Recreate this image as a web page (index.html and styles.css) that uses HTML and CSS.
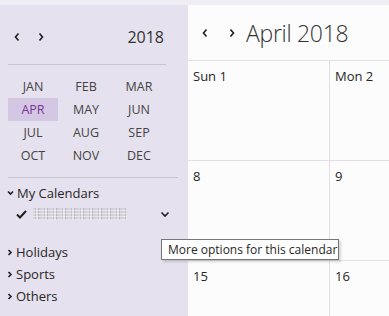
FILE: index.html
```html
<!DOCTYPE html>
<html lang="en">
<head>
    <meta charset="UTF-8">
    <title>Calendar</title>
    <link rel="stylesheet" href="styles.css">
</head>
<body>

    <div class="topbar"></div>

    <div class="app">

        <!-- Sidebar -->
        <div class="sidebar">
            <div class="year-nav">
                <span class="arrows">
                    <svg width="8" height="10" viewBox="0 0 8 10"><polyline points="5.5,1.5 2.5,5 5.5,8.5" /></svg>
                    <svg width="8" height="10" viewBox="0 0 8 10"><polyline points="2.5,1.5 5.5,5 2.5,8.5" /></svg>
                </span>
                <span class="year">2018</span>
            </div>
            <div class="sep"></div>

            <div class="months">
                <span>JAN</span><span>FEB</span><span>MAR</span>
                <span class="active">APR</span><span>MAY</span><span>JUN</span>
                <span>JUL</span><span>AUG</span><span>SEP</span>
                <span>OCT</span><span>NOV</span><span>DEC</span>
            </div>
            <div class="sep wide"></div>

            <div class="group open">
                <svg width="7" height="6" viewBox="0 0 7 6"><polyline points="1,1.5 3.5,4 6,1.5" /></svg>
                My Calendars
            </div>
            <div class="cal-item">
                <svg class="check" width="11" height="9" viewBox="0 0 11 9"><polyline points="1,4.5 4,7.5 10,1" /></svg>
                <!-- name is pixelated in the source -->
                <span class="blurred"></span>
                <svg class="more" width="10" height="7" viewBox="0 0 10 7"><polyline points="1.5,1.5 5,5 8.5,1.5" /></svg>
            </div>

            <div class="group first">
                <svg width="6" height="7" viewBox="0 0 6 7"><polyline points="1.5,1 4,3.5 1.5,6" /></svg>
                Holidays
            </div>
            <div class="group">
                <svg width="6" height="7" viewBox="0 0 6 7"><polyline points="1.5,1 4,3.5 1.5,6" /></svg>
                Sports
            </div>
            <div class="group">
                <svg width="6" height="7" viewBox="0 0 6 7"><polyline points="1.5,1 4,3.5 1.5,6" /></svg>
                Others
            </div>
        </div>

        <!-- Month view -->
        <div class="main">
            <div class="header">
                <span class="arrows">
                    <svg width="8" height="10" viewBox="0 0 8 10"><polyline points="5.5,1.5 2.5,5 5.5,8.5" /></svg>
                    <svg width="8" height="10" viewBox="0 0 8 10"><polyline points="2.5,1.5 5.5,5 2.5,8.5" /></svg>
                </span>
                <span class="title">April 2018</span>
            </div>
            <div class="grid">
                <div class="day">Sun 1</div>
                <div class="day">Mon 2</div>
                <div class="day">8</div>
                <div class="day">9</div>
                <div class="day">15</div>
                <div class="day">16</div>
            </div>
        </div>
    </div>

    <div class="tooltip">More options for this calendar</div>

</body>
</html>
```

FILE: styles.css
```css
body {
    margin: 0;
    font-family: "Open Sans", "Noto Sans", sans-serif;
    color: #262626;
    overflow: hidden;
    height: 316px;
    background-color: #fcfcfd;
}

svg polyline {
    fill: none;
    stroke: #1f1f1f;
    stroke-width: 1.6;
}

.topbar {
    height: 5px;
    background-color: #f0eef5;
}

.app {
    display: flex;
    height: 311px;
    overflow: hidden;
}

/* Sidebar */
.sidebar {
    width: 188px;
    flex-shrink: 0;
    background-color: #e6e1ee;
}

.year-nav {
    height: 59px;
    display: flex;
    align-items: center;
    justify-content: space-between;
    padding: 4px 24px 0 13px;
    box-sizing: border-box;
}

.arrows {
    display: flex;
    gap: 16px;
}

.year {
    font-size: 16px;
    color: #333;
}

.sep {
    border-top: 1px solid #c9c4cf;
    margin: 0 22px 0 8px;
}

.sep.wide {
    margin: 10px 10px 0 8px;
}

.months {
    display: grid;
    grid-template-columns: repeat(3, 50px);
    grid-auto-rows: 23px;
    column-gap: 3px;
    padding: 10px 0 0 8px;
    font-size: 12.5px;
    color: #444;
}

.months span {
    display: flex;
    align-items: center;
    justify-content: center;
}

.months .active {
    background-color: #d4c7e3;
    color: #7a3596;
}

.group {
    display: flex;
    align-items: center;
    gap: 3px;
    height: 22px;
    padding-left: 7px;
    font-size: 13px;
}

.group.open {
    margin-top: 4px;
}

.group.first {
    margin-top: 17px;
}

.cal-item {
    display: flex;
    align-items: center;
    height: 20px;
    padding-left: 16px;
}

.cal-item .check polyline {
    stroke-width: 2;
}

.blurred {
    margin-left: 6px;
    width: 94px;
    height: 12px;
    background:
        repeating-linear-gradient(0deg, rgba(255, 255, 255, 0.5) 0 1px, transparent 1px 3px),
        repeating-linear-gradient(90deg, #d8d3dd 0 2px, #bbb6c1 2px 3px, #e4e0e8 3px 5px, #b0abb6 5px 6px, #d2cdd7 6px 9px);
    filter: blur(0.5px);
    opacity: 0.85;
}

.cal-item .more {
    margin-left: 33px;
}

/* Month view */
.main {
    flex: 1;
    background-color: #fcfcfd;
    overflow: hidden;
}

.header {
    height: 56px;
    display: flex;
    align-items: center;
    gap: 10px;
    padding-left: 13px;
    border-bottom: 1px solid #e1dfe4;
    box-sizing: border-box;
}

.header .arrows {
    gap: 19px;
    margin-top: 1px;
}

.title {
    font-size: 23px;
    font-weight: 300;
    letter-spacing: -0.3px;
    color: #333;
}

.grid {
    display: grid;
    grid-template-columns: 142px 142px;
    grid-auto-rows: 100px;
}

.day {
    border-right: 1px solid #e1dfe4;
    border-bottom: 1px solid #e1dfe4;
    padding: 6px 0 0 5px;
    font-size: 13px;
}

.tooltip {
    position: absolute;
    left: 161px;
    top: 239px;
    width: 170px;
    height: 19px;
    background-color: #fff;
    border: 1px solid #767676;
    box-shadow: 2px 2px 2px rgba(0, 0, 0, 0.15);
    font-size: 12px;
    line-height: 19px;
    padding-left: 6px;
    box-sizing: content-box;
}
```
